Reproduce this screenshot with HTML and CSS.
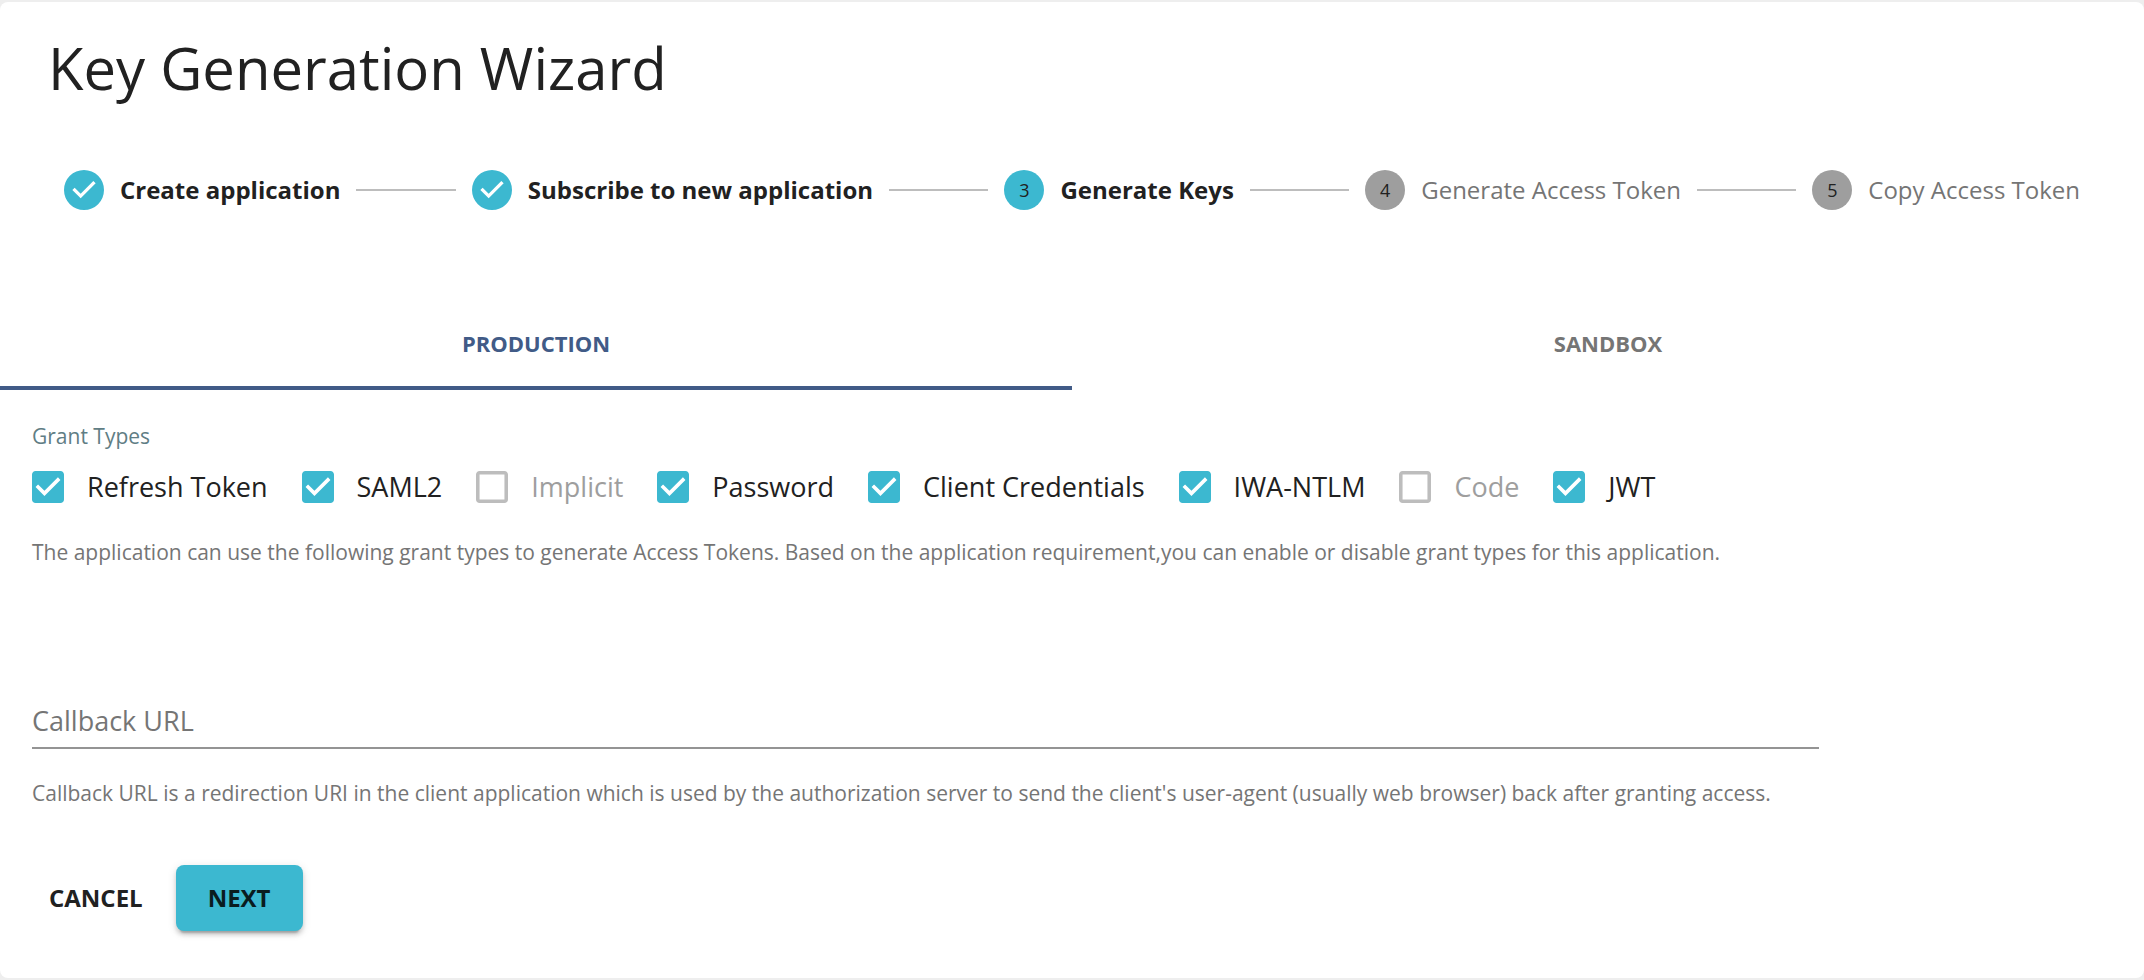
FILE: index.html
```html
<!DOCTYPE html>
<html lang="en">
<head>
<meta charset="utf-8">
<title>Key Generation Wizard</title>
<link rel="stylesheet" href="styles.css">
</head>
<body>
<svg class="defs" aria-hidden="true">
  <symbol id="step-done" viewBox="0 0 24 24"><path d="M12 0a12 12 0 1 0 0 24 12 12 0 0 0 0-24zm-2 17l-5-5 1.4-1.4 3.6 3.6 7.6-7.6L19 8l-9 9z"/></symbol>
  <symbol id="box-on" viewBox="3 3 18 18"><path d="M19 3H5c-1.11 0-2 .9-2 2v14c0 1.1.89 2 2 2h14c1.11 0 2-.9 2-2V5c0-1.1-.89-2-2-2zm-9 14l-5-5 1.41-1.41L10 14.17l7.59-7.59L19 8l-9 9z"/></symbol>
  <symbol id="box-off" viewBox="3 3 18 18"><path d="M19 5v14H5V5h14m0-2H5c-1.1 0-2 .9-2 2v14c0 1.1.9 2 2 2h14c1.1 0 2-.9 2-2V5c0-1.1-.9-2-2-2z"/></symbol>
</svg>
<main class="card">
  <h1 class="title">Key Generation Wizard</h1>

  <ol class="stepper">
    <li class="step step-on"><svg class="step-icon"><use href="#step-done"/></svg><span>Create application</span></li>
    <li class="line" aria-hidden="true"></li>
    <li class="step step-on"><svg class="step-icon"><use href="#step-done"/></svg><span>Subscribe to new application</span></li>
    <li class="line" aria-hidden="true"></li>
    <li class="step step-on" aria-current="step"><span class="step-num">3</span><span>Generate Keys</span></li>
    <li class="line" aria-hidden="true"></li>
    <li class="step"><span class="step-num">4</span><span>Generate Access Token</span></li>
    <li class="line" aria-hidden="true"></li>
    <li class="step"><span class="step-num">5</span><span>Copy Access Token</span></li>
  </ol>

  <div class="tabs" role="tablist">
    <button class="tab tab-active" type="button" role="tab" aria-selected="true">PRODUCTION</button>
    <button class="tab" type="button" role="tab" aria-selected="false">SANDBOX</button>
  </div>

  <form class="form">
    <fieldset class="grants">
      <legend class="legend">Grant Types</legend>
      <div class="options">
        <label class="option"><span class="check"><input type="checkbox" checked><svg><use href="#box-on"/></svg></span>Refresh Token</label>
        <label class="option"><span class="check"><input type="checkbox" checked><svg><use href="#box-on"/></svg></span>SAML2</label>
        <label class="option option-disabled"><span class="check"><input type="checkbox" disabled><svg><use href="#box-off"/></svg></span>Implicit</label>
        <label class="option"><span class="check"><input type="checkbox" checked><svg><use href="#box-on"/></svg></span>Password</label>
        <label class="option"><span class="check"><input type="checkbox" checked><svg><use href="#box-on"/></svg></span>Client Credentials</label>
        <label class="option"><span class="check"><input type="checkbox" checked><svg><use href="#box-on"/></svg></span>IWA-NTLM</label>
        <label class="option option-disabled"><span class="check"><input type="checkbox" disabled><svg><use href="#box-off"/></svg></span>Code</label>
        <label class="option"><span class="check"><input type="checkbox" checked><svg><use href="#box-on"/></svg></span>JWT</label>
      </div>
      <p class="help">The application can use the following grant types to generate Access Tokens. Based on the application requirement,you can enable or disable grant types for this application.</p>
    </fieldset>

    <div class="field">
      <input class="text-input" type="text" placeholder="Callback URL" aria-label="Callback URL" aria-describedby="callback-help">
      <p class="help" id="callback-help">Callback URL is a redirection URI in the client application which is used by the authorization server to send the client's user-agent (usually web browser) back after granting access.</p>
    </div>

    <div class="actions">
      <button class="btn" type="button">CANCEL</button>
      <button class="btn btn-primary" type="button">NEXT</button>
    </div>
  </form>
</main>
</body>
</html>
```
FILE: styles.css
```css
* { box-sizing: border-box; }

body {
  margin: 0;
  padding: 2px 0;
  background: #eee;
  color: #212121;
  font-family: "Open Sans", "Noto Sans", sans-serif;
}

.defs { position: absolute; width: 0; height: 0; }

.card {
  min-height: calc(100vh - 4px);
  background: #fff;
  border-radius: 8px;
}

.title {
  margin: 0;
  padding: 24px 48px 0;
  font-size: 58px;
  line-height: 84px;
  font-weight: 400;
}

.stepper {
  display: flex;
  align-items: center;
  gap: 16px;
  margin: 0;
  padding: 60px 64px 0;
  list-style: none;
  font-size: 24px;
  line-height: 40px;
}

.step {
  display: flex;
  align-items: center;
  gap: 16px;
  color: #757575;
  white-space: nowrap;
}
.step-on { color: #212121; font-weight: 700; }

.step-icon { width: 40px; height: 40px; fill: #3cb8d0; }

.step-num {
  width: 40px;
  height: 40px;
  border-radius: 50%;
  background: #9e9e9e;
  color: #212121;
  font-size: 18px;
  font-weight: 400;
  text-align: center;
}
.step-on .step-num { background: #3cb8d0; }

.line { flex: 1; height: 2px; background: #bdbdbd; }

.tabs {
  display: flex;
  width: 100%;
  padding-top: 88px;
}

.tab {
  flex: 1;
  height: 92px;
  padding: 2px 0 0;
  border: 0;
  border-bottom: 4px solid transparent;
  background: none;
  color: #757575;
  font: 700 22px/32px "Open Sans", "Noto Sans", sans-serif;
}
.tab-active { border-color: #415b87; color: #415b87; }

.form { padding: 28px 32px 0; }

.grants { margin: 0; padding: 0; border: 0; }

.legend {
  padding: 0;
  color: #607d84;
  font-size: 21px;
  line-height: 36px;
}

.options {
  display: flex;
  flex-wrap: wrap;
  gap: 34px;
  padding-top: 12px;
}

.option {
  display: flex;
  align-items: center;
  gap: 23px;
  font-size: 27px;
  line-height: 42px;
}
.option-disabled { color: #9e9e9e; }

.check { display: grid; width: 32px; height: 32px; }
.check input {
  grid-area: 1 / 1;
  width: 32px;
  height: 32px;
  margin: 0;
  appearance: none;
}
.check svg {
  grid-area: 1 / 1;
  width: 32px;
  height: 32px;
  fill: #3cb8d0;
  pointer-events: none;
}
.option-disabled svg { fill: #bdbdbd; }

.help {
  margin: 0;
  padding-top: 28px;
  color: #757575;
  font-size: 21px;
  line-height: 32px;
}

.field { padding-top: 120px; }

.text-input {
  display: block;
  width: calc(100vw * 5 / 6);
  height: 61px;
  padding: 6px 0 0;
  border: 0;
  border-bottom: 2px solid #949494;
  background: none;
  color: #212121;
  font: 400 27px/40px "Open Sans", "Noto Sans", sans-serif;
}
.text-input::placeholder { color: #757575; opacity: 1; }

.actions {
  display: flex;
  gap: 16px;
  padding-top: 56px;
}

.btn {
  height: 66px;
  padding: 0 17px;
  border: 0;
  border-radius: 8px;
  background: none;
  color: #212121;
  font: 700 24px/42px "Open Sans", "Noto Sans", sans-serif;
}
.btn-primary {
  padding: 0 32px;
  background: #3cb8d0;
  color: #0a1c1f;
  box-shadow: 0 6px 2px -4px rgba(0, 0, 0, .2), 0 4px 4px rgba(0, 0, 0, .14), 0 2px 10px rgba(0, 0, 0, .12);
}
```
